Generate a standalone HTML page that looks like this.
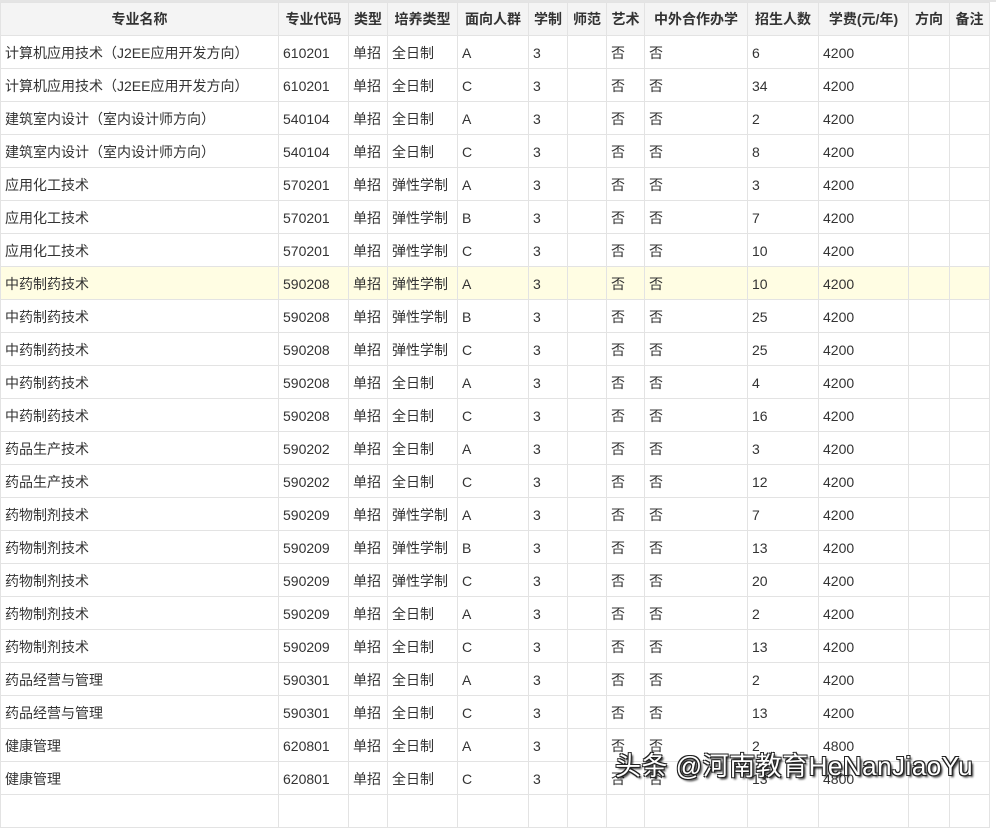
<!DOCTYPE html>
<html><head><meta charset="utf-8"><style>
html,body{margin:0;padding:0;background:#fff;width:996px;height:798px;overflow:hidden}
body{font-family:"Liberation Sans","Noto Sans CJK SC",sans-serif;color:#333;font-size:14px}
.top{position:absolute;left:0;top:0;width:996px;height:2px;background:#e4e4e4}
table{position:absolute;left:0;top:2px;border-collapse:collapse;table-layout:fixed;width:989px}
td,th{border:1px solid #e3e3e3;height:31px;padding:1px 0 0 4px;white-space:nowrap;overflow:hidden;text-align:left;font-weight:normal;box-sizing:content-box}
th{background:#f4f4f4;font-weight:bold;text-align:center;padding:0;height:32px;color:#333}
tr.hl td{background:#fffde3}
.wm{position:absolute;left:615px;top:746px;font-size:26px;color:#fff;font-family:"Liberation Sans","Noto Sans CJK SC",sans-serif;
text-shadow:1px 1px 0 #222,-1px -1px 0 #222,1px -1px 0 #222,-1px 1px 0 #222,2px 2px 2px #000;letter-spacing:0.5px}
</style></head><body>
<div class="top"></div>
<table>
<colgroup><col style="width:278px"><col style="width:70px"><col style="width:39px"><col style="width:70px"><col style="width:71px"><col style="width:39px"><col style="width:39px"><col style="width:38px"><col style="width:103px"><col style="width:71px"><col style="width:90px"><col style="width:41px"><col style="width:40px"></colgroup>
<tr><th>专业名称</th><th>专业代码</th><th>类型</th><th>培养类型</th><th>面向人群</th><th>学制</th><th>师范</th><th>艺术</th><th>中外合作办学</th><th>招生人数</th><th>学费(元/年)</th><th>方向</th><th>备注</th></tr>
<tr><td>计算机应用技术（J2EE应用开发方向）</td><td>610201</td><td>单招</td><td>全日制</td><td>A</td><td>3</td><td></td><td>否</td><td>否</td><td>6</td><td>4200</td><td></td><td></td></tr>
<tr><td>计算机应用技术（J2EE应用开发方向）</td><td>610201</td><td>单招</td><td>全日制</td><td>C</td><td>3</td><td></td><td>否</td><td>否</td><td>34</td><td>4200</td><td></td><td></td></tr>
<tr><td>建筑室内设计（室内设计师方向）</td><td>540104</td><td>单招</td><td>全日制</td><td>A</td><td>3</td><td></td><td>否</td><td>否</td><td>2</td><td>4200</td><td></td><td></td></tr>
<tr><td>建筑室内设计（室内设计师方向）</td><td>540104</td><td>单招</td><td>全日制</td><td>C</td><td>3</td><td></td><td>否</td><td>否</td><td>8</td><td>4200</td><td></td><td></td></tr>
<tr><td>应用化工技术</td><td>570201</td><td>单招</td><td>弹性学制</td><td>A</td><td>3</td><td></td><td>否</td><td>否</td><td>3</td><td>4200</td><td></td><td></td></tr>
<tr><td>应用化工技术</td><td>570201</td><td>单招</td><td>弹性学制</td><td>B</td><td>3</td><td></td><td>否</td><td>否</td><td>7</td><td>4200</td><td></td><td></td></tr>
<tr><td>应用化工技术</td><td>570201</td><td>单招</td><td>弹性学制</td><td>C</td><td>3</td><td></td><td>否</td><td>否</td><td>10</td><td>4200</td><td></td><td></td></tr>
<tr class="hl"><td>中药制药技术</td><td>590208</td><td>单招</td><td>弹性学制</td><td>A</td><td>3</td><td></td><td>否</td><td>否</td><td>10</td><td>4200</td><td></td><td></td></tr>
<tr><td>中药制药技术</td><td>590208</td><td>单招</td><td>弹性学制</td><td>B</td><td>3</td><td></td><td>否</td><td>否</td><td>25</td><td>4200</td><td></td><td></td></tr>
<tr><td>中药制药技术</td><td>590208</td><td>单招</td><td>弹性学制</td><td>C</td><td>3</td><td></td><td>否</td><td>否</td><td>25</td><td>4200</td><td></td><td></td></tr>
<tr><td>中药制药技术</td><td>590208</td><td>单招</td><td>全日制</td><td>A</td><td>3</td><td></td><td>否</td><td>否</td><td>4</td><td>4200</td><td></td><td></td></tr>
<tr><td>中药制药技术</td><td>590208</td><td>单招</td><td>全日制</td><td>C</td><td>3</td><td></td><td>否</td><td>否</td><td>16</td><td>4200</td><td></td><td></td></tr>
<tr><td>药品生产技术</td><td>590202</td><td>单招</td><td>全日制</td><td>A</td><td>3</td><td></td><td>否</td><td>否</td><td>3</td><td>4200</td><td></td><td></td></tr>
<tr><td>药品生产技术</td><td>590202</td><td>单招</td><td>全日制</td><td>C</td><td>3</td><td></td><td>否</td><td>否</td><td>12</td><td>4200</td><td></td><td></td></tr>
<tr><td>药物制剂技术</td><td>590209</td><td>单招</td><td>弹性学制</td><td>A</td><td>3</td><td></td><td>否</td><td>否</td><td>7</td><td>4200</td><td></td><td></td></tr>
<tr><td>药物制剂技术</td><td>590209</td><td>单招</td><td>弹性学制</td><td>B</td><td>3</td><td></td><td>否</td><td>否</td><td>13</td><td>4200</td><td></td><td></td></tr>
<tr><td>药物制剂技术</td><td>590209</td><td>单招</td><td>弹性学制</td><td>C</td><td>3</td><td></td><td>否</td><td>否</td><td>20</td><td>4200</td><td></td><td></td></tr>
<tr><td>药物制剂技术</td><td>590209</td><td>单招</td><td>全日制</td><td>A</td><td>3</td><td></td><td>否</td><td>否</td><td>2</td><td>4200</td><td></td><td></td></tr>
<tr><td>药物制剂技术</td><td>590209</td><td>单招</td><td>全日制</td><td>C</td><td>3</td><td></td><td>否</td><td>否</td><td>13</td><td>4200</td><td></td><td></td></tr>
<tr><td>药品经营与管理</td><td>590301</td><td>单招</td><td>全日制</td><td>A</td><td>3</td><td></td><td>否</td><td>否</td><td>2</td><td>4200</td><td></td><td></td></tr>
<tr><td>药品经营与管理</td><td>590301</td><td>单招</td><td>全日制</td><td>C</td><td>3</td><td></td><td>否</td><td>否</td><td>13</td><td>4200</td><td></td><td></td></tr>
<tr><td>健康管理</td><td>620801</td><td>单招</td><td>全日制</td><td>A</td><td>3</td><td></td><td>否</td><td>否</td><td>2</td><td>4800</td><td></td><td></td></tr>
<tr><td>健康管理</td><td>620801</td><td>单招</td><td>全日制</td><td>C</td><td>3</td><td></td><td>否</td><td>否</td><td>13</td><td>4800</td><td></td><td></td></tr>
<tr><td></td><td></td><td></td><td></td><td></td><td></td><td></td><td></td><td></td><td></td><td></td><td></td><td></td></tr>
</table>
<div class="wm">头条 @河南教育HeNanJiaoYu</div>
</body></html>
